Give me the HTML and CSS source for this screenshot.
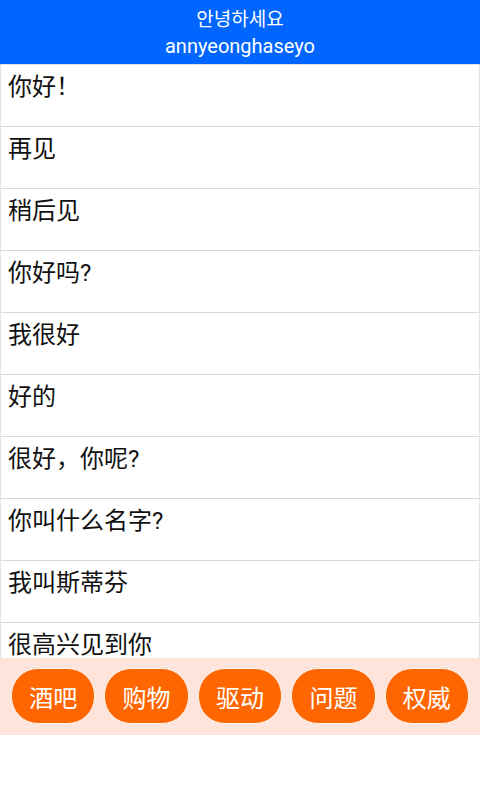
FILE: index.html
```html
<!DOCTYPE html>
<html lang="zh">
<head>
    <meta charset="UTF-8">
    <meta name="viewport" content="width=device-width, initial-scale=1.0">
    <title>短语</title>
    <link rel="stylesheet" href="styles.css">
</head>
<body>
    <header class="title-bar">
        <div class="title-ko">안녕하세요</div>
        <div class="title-roman">annyeonghaseyo</div>
    </header>

    <ul class="phrase-list">
        <li class="phrase">你好！</li>
        <li class="phrase">再见</li>
        <li class="phrase">稍后见</li>
        <li class="phrase">你好吗?</li>
        <li class="phrase">我很好</li>
        <li class="phrase">好的</li>
        <li class="phrase">很好，你呢?</li>
        <li class="phrase">你叫什么名字?</li>
        <li class="phrase">我叫斯蒂芬</li>
        <li class="phrase">很高兴见到你</li>
        <li class="phrase">谢谢</li>
    </ul>

    <nav class="category-bar">
        <button class="category">酒吧</button>
        <button class="category">购物</button>
        <button class="category">驱动</button>
        <button class="category">问题</button>
        <button class="category">权威</button>
    </nav>
</body>
</html>
```

FILE: styles.css
```css
body {
    margin: 0;
    font-family: Roboto, "Noto Sans CJK SC", sans-serif;
    background-color: #fff;
}

.title-bar {
    background-color: #0066ff;
    color: white;
    text-align: center;
    height: 64px;
    padding: 4px 0;
    box-sizing: border-box;
    font-size: 20px;
    line-height: 28px;
}

.title-ko {
    font-family: "Noto Sans CJK KR", sans-serif;
    font-size: 19px;
}

.phrase-list {
    list-style: none;
    margin: 0;
    padding: 0;
    height: 594px;
    box-sizing: border-box;
    overflow: hidden;
    border: 1px solid #e2e2e2;
    border-bottom: none;
}

.phrase {
    height: 62px;
    box-sizing: border-box;
    padding: 5px 7px 0;
    border-bottom: 1px solid #d9d9d9;
    font-size: 24px;
    line-height: 34px;
    color: #111;
}

.category-bar {
    display: flex;
    gap: 9px;
    padding: 10px 11px 11px;
    background-color: #fee4da;
}

.category {
    flex: 1;
    height: 56px;
    border: 1px solid #fff3ee;
    border-radius: 27px;
    background-color: #ff6600;
    color: white;
    font-family: "Noto Sans CJK SC", sans-serif;
    font-size: 24px;
    padding: 0;
    cursor: pointer;
}
```
